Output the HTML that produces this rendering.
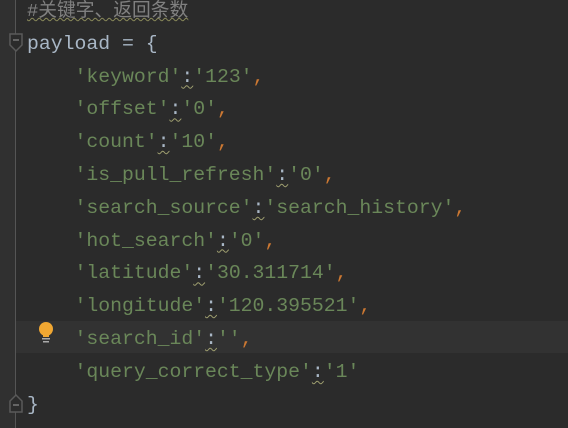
<!DOCTYPE html>
<html><head><meta charset="utf-8"><style>
html,body{margin:0;padding:0;width:568px;height:428px;overflow:hidden;background:#2b2b2b;position:relative;}
.g{position:absolute;left:0;top:0;width:15px;height:428px;background:#303030;}
.gl{position:absolute;left:15px;top:0;width:1px;height:428px;background:#555;}
.hl{position:absolute;left:16px;top:321px;width:552px;height:32px;background:#323232;}
.code{position:absolute;left:27px;top:-5px;height:433px;overflow:hidden;font-family:"Liberation Mono","Noto Sans CJK SC",monospace;font-size:19.8px;color:#a9b7c6;}
.l{height:32.8px;line-height:32.8px;white-space:pre;}
.s{color:#6a8759}.c{color:#cc7832}.m{color:#808080;font-size:18.75px;text-decoration:underline wavy #8a8a5a;text-decoration-thickness:1px;}
.w{text-decoration:underline wavy #a0a070;text-decoration-thickness:1px;text-underline-offset:3px;}
</style></head><body>
<div class="g"></div><div class="gl"></div><div class="hl"></div>
<svg style="position:absolute;left:9px;top:33px" width="14" height="20"><path d="M1 1H13V12L7 18L1 12Z" fill="#2b2b2b" stroke="#5a5a5a" stroke-width="1.5"/><path d="M4 7H10" stroke="#777" stroke-width="1.5"/></svg>
<svg style="position:absolute;left:9px;top:393px" width="14" height="20"><path d="M1 19H13V8L7 2L1 8Z" fill="#2b2b2b" stroke="#5a5a5a" stroke-width="1.5"/><path d="M4 12H10" stroke="#777" stroke-width="1.5"/></svg>
<svg style="position:absolute;left:38px;top:321px" width="18" height="24"><circle cx="8" cy="8" r="7" fill="#f0a732"/><rect x="5" y="13" width="6" height="3" fill="#f0a732"/><rect x="4" y="17" width="8" height="1.5" fill="#aaa"/><rect x="5" y="20" width="6" height="1.5" fill="#aaa"/></svg>
<div class="code"><div class="l"><span class="m">#关键字、返回条数</span></div><div class="l">payload = {</div><div class="l">    <span class="s">'keyword'</span><span class="w">:</span><span class="s">'123'</span><span class="c">,</span></div><div class="l">    <span class="s">'offset'</span><span class="w">:</span><span class="s">'0'</span><span class="c">,</span></div><div class="l">    <span class="s">'count'</span><span class="w">:</span><span class="s">'10'</span><span class="c">,</span></div><div class="l">    <span class="s">'is_pull_refresh'</span><span class="w">:</span><span class="s">'0'</span><span class="c">,</span></div><div class="l">    <span class="s">'search_source'</span><span class="w">:</span><span class="s">'search_history'</span><span class="c">,</span></div><div class="l">    <span class="s">'hot_search'</span><span class="w">:</span><span class="s">'0'</span><span class="c">,</span></div><div class="l">    <span class="s">'latitude'</span><span class="w">:</span><span class="s">'30.311714'</span><span class="c">,</span></div><div class="l">    <span class="s">'longitude'</span><span class="w">:</span><span class="s">'120.395521'</span><span class="c">,</span></div><div class="l">    <span class="s">'search_id'</span><span class="w">:</span><span class="s">''</span><span class="c">,</span></div><div class="l">    <span class="s">'query_correct_type'</span><span class="w">:</span><span class="s">'1'</span></div><div class="l">}</div><div class="l">    r = requests.post(url, headers=</div></div>
</body></html>
